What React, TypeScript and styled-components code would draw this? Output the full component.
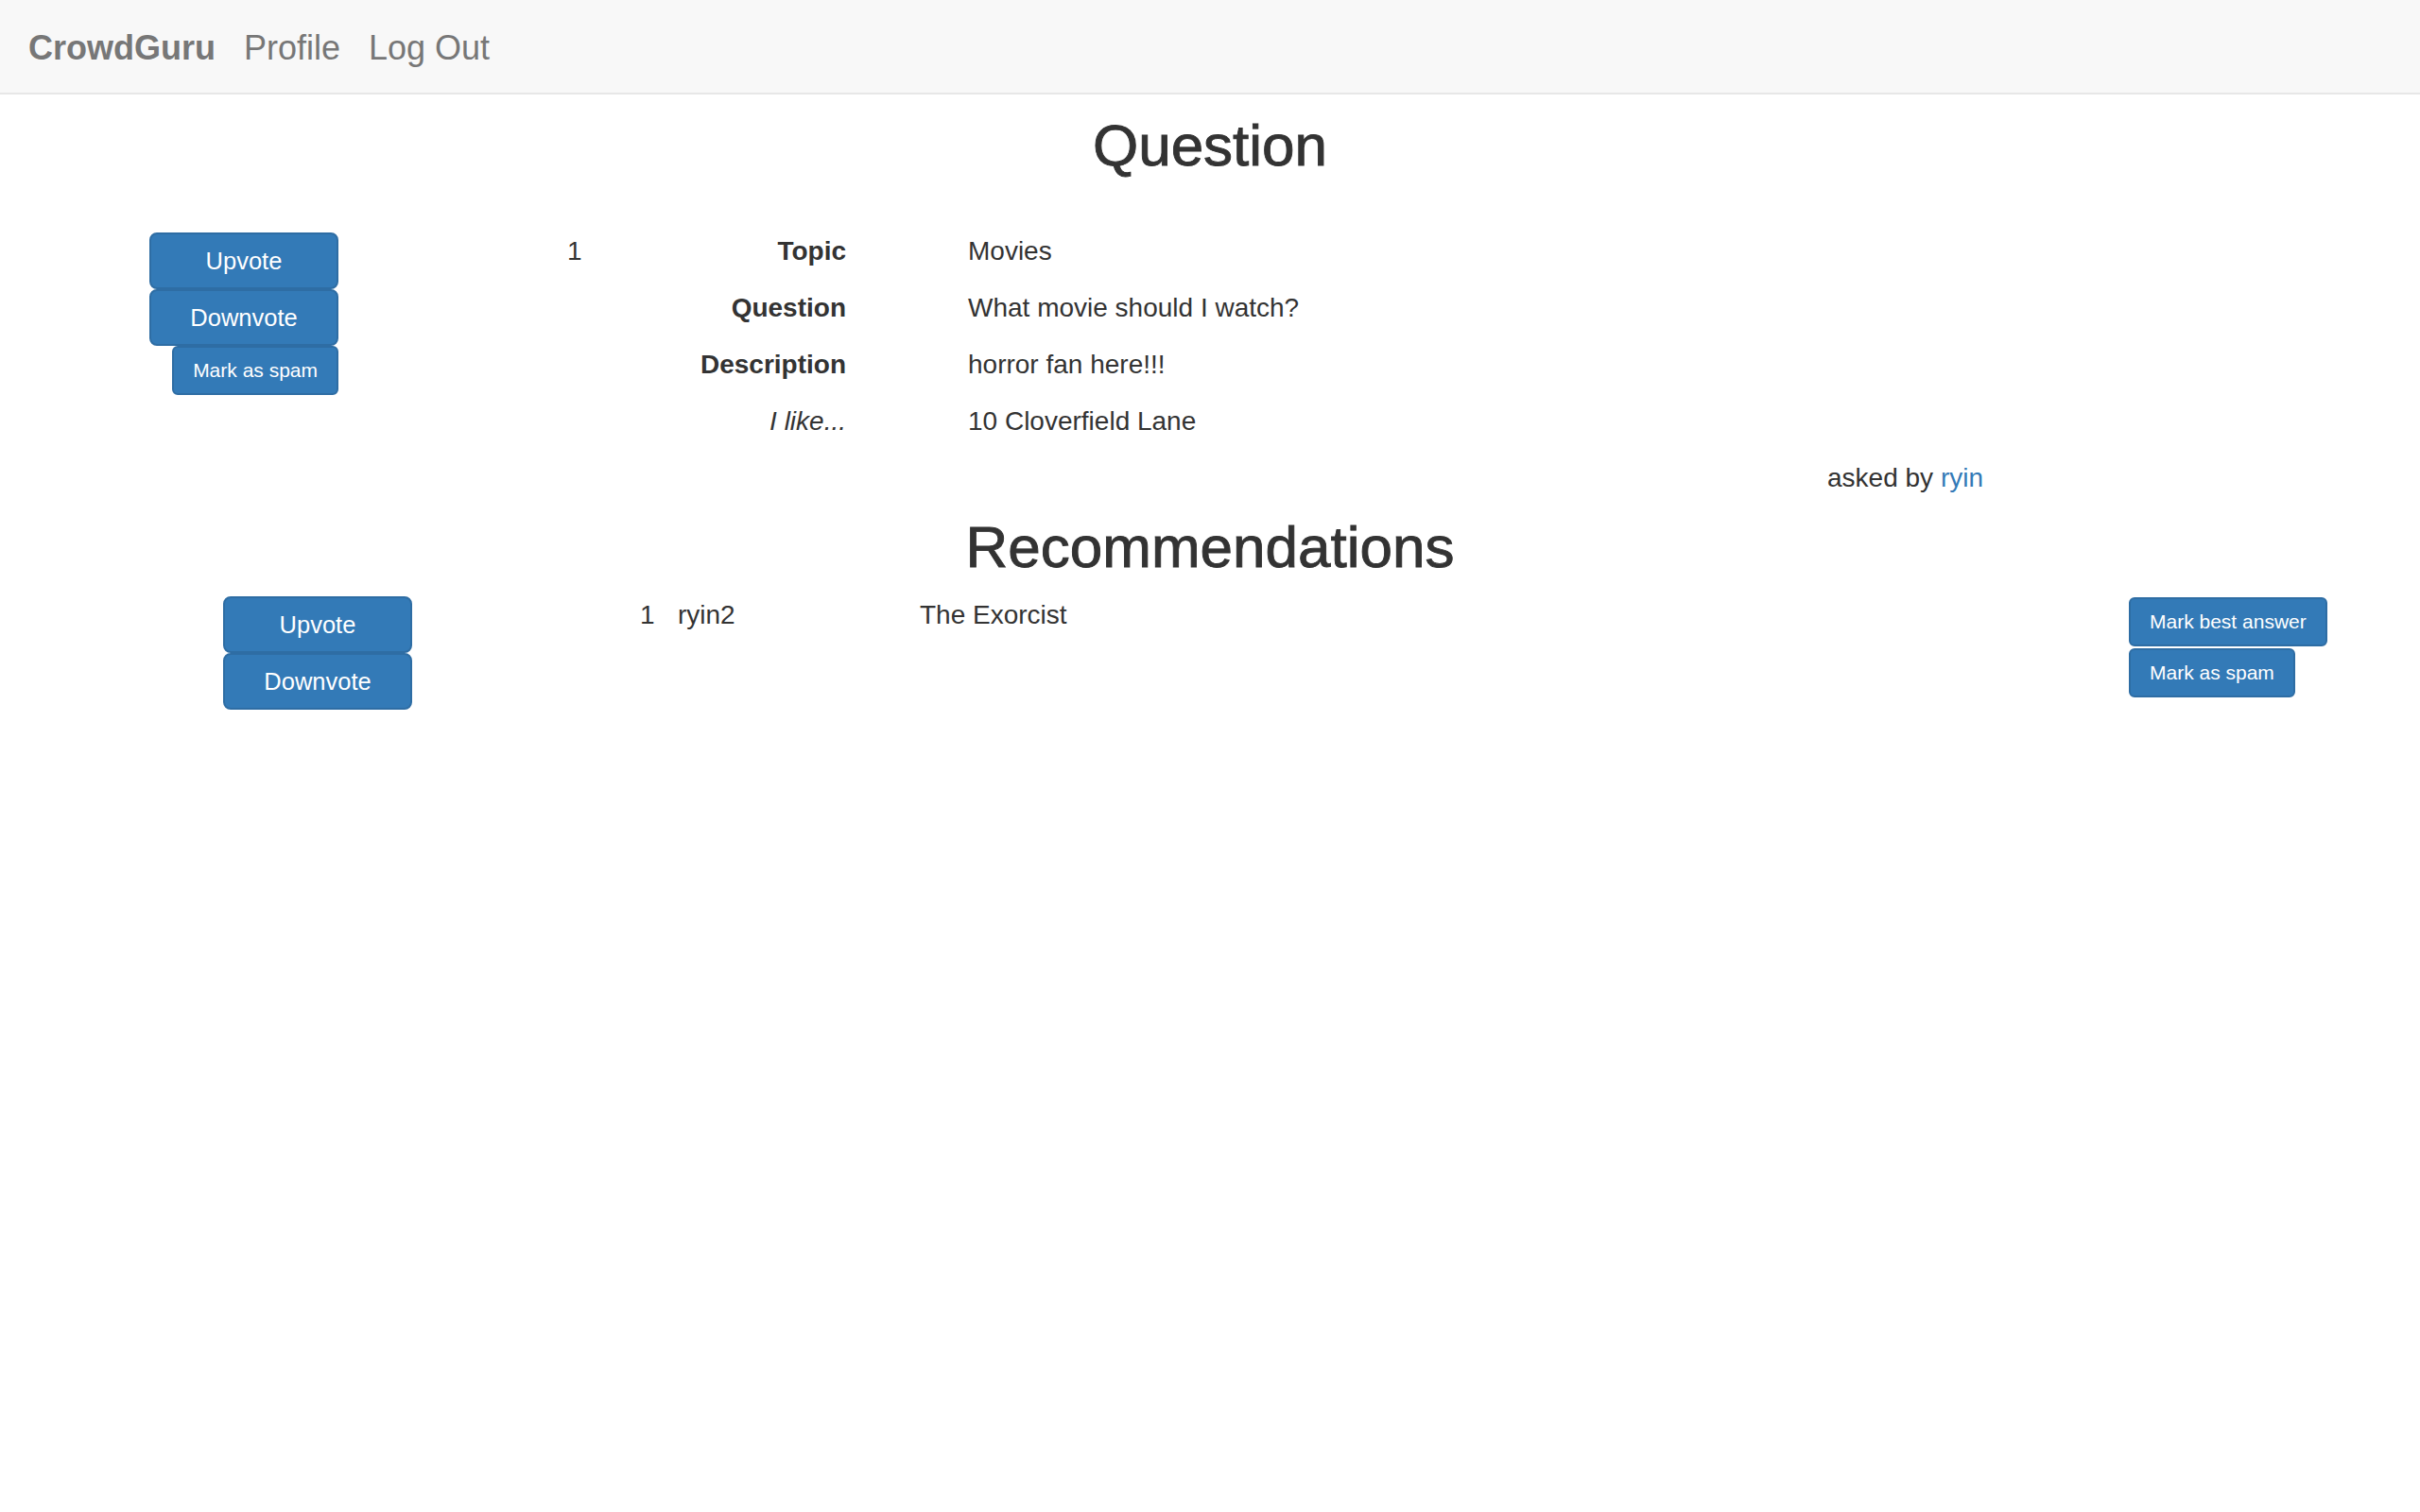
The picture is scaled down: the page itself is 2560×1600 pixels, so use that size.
import * as React from 'react';
import styled, {createGlobalStyle} from 'styled-components';

const GlobalStyle = createGlobalStyle`
  html, body {
    margin: 0;
    padding: 0;
    background: #fff;
  }
  body {
    font-family: "Liberation Sans", Arial, Helvetica, sans-serif;
    font-size: 28px;
    line-height: 40px;
    color: #333;
  }
  * {
    box-sizing: border-box;
  }
`;

const Navbar = styled.nav`
  display: flex;
  align-items: center;
  gap: 30px;
  height: 100px;
  padding: 3px 30px 0;
  background: #f8f8f8;
  border-bottom: 2px solid #e7e7e7;
  font-size: 36px;
  line-height: 40px;
  color: #777;
`;

const NavItem = styled.a<{$brand?: boolean}>`
  color: #777;
  text-decoration: none;
  font-weight: ${p => (p.$brand ? 700 : 400)};
`;

const Heading = styled.h2<{$top: number}>`
  margin: ${p => p.$top}px 0 0;
  font-size: 62px;
  line-height: 67px;
  font-weight: 400;
  -webkit-text-stroke: 0.9px #333;
  text-align: center;
  color: #333;
`;

const Row = styled.div<{$top: number}>`
  display: flex;
  align-items: flex-start;
  margin-top: ${p => p.$top}px;
`;

const VoteColumn = styled.div<{$width: number}>`
  display: flex;
  flex-direction: column;
  align-items: flex-end;
  width: ${p => p.$width}px;
  flex-shrink: 0;
`;

const ActionColumn = styled.div`
  display: flex;
  flex-direction: column;
  align-items: flex-start;
  gap: 2px;
  width: 308px;
  flex-shrink: 0;
  padding-top: 1px;
`;

const Button = styled.button<{$small?: boolean}>`
  display: flex;
  align-items: center;
  justify-content: center;
  height: ${p => (p.$small ? 52 : 60)}px;
  width: ${p => (p.$small ? 'auto' : '200px')};
  padding: 0 ${p => (p.$small ? 20 : 24)}px;
  font-family: "Liberation Sans", Arial, Helvetica, sans-serif;
  font-size: ${p => (p.$small ? 21 : 25.5)}px;
  color: #fff;
  background: #337ab7;
  border: 2px solid #2e6da4;
  border-radius: ${p => (p.$small ? 6 : 8)}px;
  cursor: pointer;
  white-space: nowrap;
`;

const Index = styled.div<{$gap: number}>`
  margin-left: ${p => p.$gap}px;
  width: 40px;
  flex-shrink: 0;
`;

const Details = styled.dl`
  display: grid;
  grid-template-columns: 255px 1fr;
  column-gap: 129px;
  row-gap: 20px;
  margin: 0;
`;

const Label = styled.dt<{$italic?: boolean}>`
  text-align: right;
  font-weight: ${p => (p.$italic ? 400 : 700)};
  font-style: ${p => (p.$italic ? 'italic' : 'normal')};
`;

const Value = styled.dd`
  margin: 0;
`;

const AskedBy = styled.div`
  width: 2098px;
  margin-top: 20px;
  text-align: right;

  a {
    color: #337ab7;
    text-decoration: none;
  }
`;

const Author = styled.div`
  width: 256px;
  flex-shrink: 0;
`;

const Body = styled.div`
  flex: 1;
`;

const details = [
  {label: 'Topic', value: 'Movies'},
  {label: 'Question', value: 'What movie should I watch?'},
  {label: 'Description', value: 'horror fan here!!!'},
  {label: 'I like...', value: '10 Cloverfield Lane', italic: true},
];

export default function App() {
  return (
    <>
      <GlobalStyle />
      <Navbar>
        <NavItem $brand href="#">CrowdGuru</NavItem>
        <NavItem href="#">Profile</NavItem>
        <NavItem href="#">Log Out</NavItem>
      </Navbar>

      <Heading $top={20}>Question</Heading>
      <Row $top={59}>
        <VoteColumn $width={358}>
          <Button>Upvote</Button>
          <Button>Downvote</Button>
          <Button $small>Mark as spam</Button>
        </VoteColumn>
        <Index $gap={242}>1</Index>
        <Details>
          {details.map(d => (
            <React.Fragment key={d.label}>
              <Label $italic={d.italic}>{d.label}</Label>
              <Value>{d.value}</Value>
            </React.Fragment>
          ))}
        </Details>
      </Row>
      <AskedBy>
        asked by <a href="#">ryin</a>
      </AskedBy>

      <Heading $top={19}>Recommendations</Heading>
      <Row $top={19}>
        <VoteColumn $width={436}>
          <Button>Upvote</Button>
          <Button>Downvote</Button>
        </VoteColumn>
        <Index $gap={241}>1</Index>
        <Author>ryin2</Author>
        <Body>The Exorcist</Body>
        <ActionColumn>
          <Button $small>Mark best answer</Button>
          <Button $small>Mark as spam</Button>
        </ActionColumn>
      </Row>
    </>
  );
}
